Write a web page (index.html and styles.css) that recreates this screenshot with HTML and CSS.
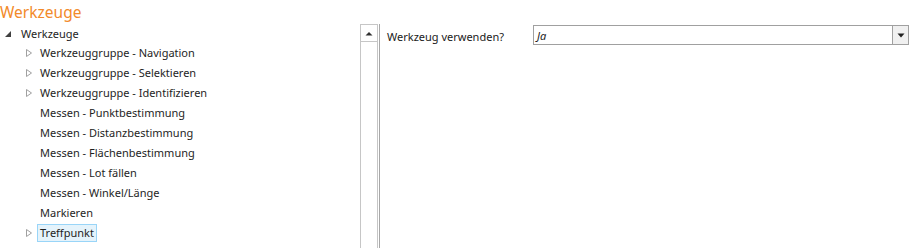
FILE: index.html
```html
<!DOCTYPE html>
<html lang="de">
<head>
<meta charset="utf-8">
<link rel="stylesheet" href="styles.css">
</head>
<body>
<div class="title">Werkzeuge</div>
<div class="main">
  <div class="tree">
    <div class="row root">
      <svg class="exp" width="8" height="8" viewBox="0 0 8 8"><path d="M6 1 L6 7 L0 7 Z" fill="#404040"/></svg>
      <span class="lbl">Werkzeuge</span>
    </div>
    <div class="row child">
      <svg class="exp" width="8" height="10" viewBox="0 0 8 10"><path d="M1.5 1.5 L6.5 5 L1.5 8.5 Z" fill="none" stroke="#a0a0a0"/></svg>
      <span class="lbl">Werkzeuggruppe - Navigation</span>
    </div>
    <div class="row child">
      <svg class="exp" width="8" height="10" viewBox="0 0 8 10"><path d="M1.5 1.5 L6.5 5 L1.5 8.5 Z" fill="none" stroke="#a0a0a0"/></svg>
      <span class="lbl">Werkzeuggruppe - Selektieren</span>
    </div>
    <div class="row child">
      <svg class="exp" width="8" height="10" viewBox="0 0 8 10"><path d="M1.5 1.5 L6.5 5 L1.5 8.5 Z" fill="none" stroke="#a0a0a0"/></svg>
      <span class="lbl">Werkzeuggruppe - Identifizieren</span>
    </div>
    <div class="row child"><span class="noexp"></span><span class="lbl">Messen - Punktbestimmung</span></div>
    <div class="row child"><span class="noexp"></span><span class="lbl">Messen - Distanzbestimmung</span></div>
    <div class="row child"><span class="noexp"></span><span class="lbl">Messen - Flächenbestimmung</span></div>
    <div class="row child"><span class="noexp"></span><span class="lbl">Messen - Lot fällen</span></div>
    <div class="row child"><span class="noexp"></span><span class="lbl">Messen - Winkel/Länge</span></div>
    <div class="row child"><span class="noexp"></span><span class="lbl">Markieren</span></div>
    <div class="row child">
      <svg class="exp" width="8" height="10" viewBox="0 0 8 10"><path d="M1.5 1.5 L6.5 5 L1.5 8.5 Z" fill="none" stroke="#a0a0a0"/></svg>
      <span class="lbl selected">Treffpunkt</span>
    </div>
  </div>
  <div class="scroll">
    <div class="upbtn">
      <svg width="8" height="5" viewBox="0 0 8 5"><path d="M0.5 4.5 L4 1 L7.5 4.5 Z" fill="#303030"/></svg>
    </div>
  </div>
  <div class="props">
    <div class="prop">
      <span class="plabel">Werkzeug verwenden?</span>
      <div class="combo">
        <span class="cval">Ja</span>
        <div class="cbtn">
          <svg width="8" height="5" viewBox="0 0 8 5"><path d="M0.5 0.5 L7.5 0.5 L4 4.5 Z" fill="#202020"/></svg>
        </div>
      </div>
    </div>
  </div>
</div>
</body>
</html>
```
FILE: styles.css
```css
html, body {
  margin: 0;
  padding: 0;
  background: #ffffff;
  overflow: hidden;
}
body {
  width: 912px;
  height: 248px;
  font-family: "Noto Sans", "Open Sans", sans-serif;
  font-size: 11px;
  color: #1e1e1e;
}
.title {
  height: 24px;
  font-size: 15.5px;
  line-height: 24px;
  color: #f28a2a;
}
.main {
  display: flex;
  height: 224px;
}
.tree {
  width: 360px;
}
.row {
  display: flex;
  align-items: center;
  height: 20px;
}
.root {
  padding-left: 5px;
  height: 19px;
}
.root .exp {
  margin-right: 5px;
}
.child {
  padding-left: 25px;
}
.child .exp, .noexp {
  width: 8px;
  height: 10px;
  margin-right: 4px;
  flex: none;
}
.lbl {
  padding: 0 2px;
  line-height: 16px;
  border: 1px solid transparent;
  white-space: nowrap;
}
.selected {
  background: #e5f3fb;
  border-color: #99d5f8;
}
.scroll {
  width: 16px;
  border-left: 1px solid #c6c6c6;
  border-right: 1px solid #c6c6c6;
}
.upbtn {
  height: 16px;
  border-top: 1px solid #c6c6c6;
  border-bottom: 1px solid #c6c6c6;
  display: flex;
  align-items: center;
  justify-content: center;
}
.props {
  flex: 1;
  border-left: 1px solid #a8a8a8;
  margin-left: 1px;
  padding: 1px 3px 0 7px;
}
.prop {
  display: flex;
  align-items: center;
}
.plabel {
  width: 146px;
  color: #1a1a1a;
  padding-top: 3px;
}
.combo {
  flex: 1;
  height: 18px;
  border: 1px solid #a0a0a0;
  display: flex;
  align-items: center;
}
.cval {
  flex: 1;
  font-style: italic;
  padding-left: 3px;
  color: #1a1a1a;
}
.cbtn {
  width: 15px;
  height: 18px;
  background: #f0f0f0;
  border-left: 1px solid #a0a0a0;
  display: flex;
  align-items: center;
  justify-content: center;
}
```
